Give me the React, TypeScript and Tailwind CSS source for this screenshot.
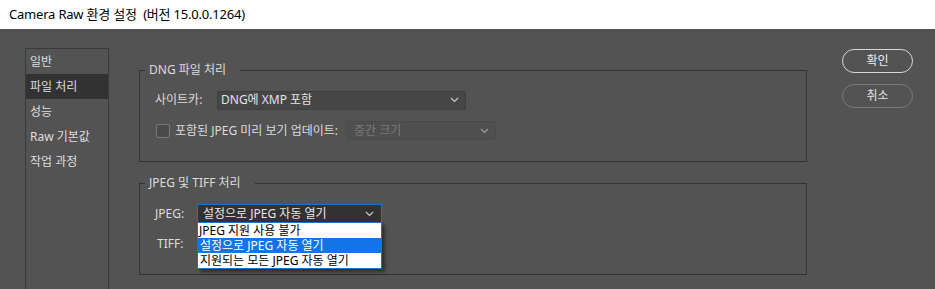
import React from "react";

const font = { fontFamily: '"Noto Sans", "Noto Sans CJK KR", sans-serif' };

function Chevron({ color = "#c8c8c8" }: { color?: string }) {
  return (
    <svg width="9" height="6" viewBox="0 0 9 6" className="shrink-0">
      <polyline points="1,1 4.5,4.5 8,1" fill="none" stroke={color} strokeWidth="1.2" />
    </svg>
  );
}

function Group({ title, children }: { title: string; children: React.ReactNode }) {
  return (
    <div className="relative h-[92px] w-[668px] border border-[#333333]">
      <span className="absolute -top-[9px] left-[5px] bg-[#535353] pl-[4px] pr-[14px] text-[12px] leading-[16px] text-[#dcdcdc]">
        {title}
      </span>
      {children}
    </div>
  );
}

const navItems = ["일반", "파일 처리", "성능", "Raw 기본값", "작업 과정"];
const jpegOptions = ["JPEG 지원 사용 불가", "설정으로 JPEG 자동 열기", "지원되는 모든 JPEG 자동 열기"];

export default function App() {
  return (
    <div className="flex h-[289px] w-[935px] flex-col overflow-hidden" style={font}>
      <div className="flex h-[29px] shrink-0 items-center bg-white pl-[9px] text-[13px] tracking-[-0.2px] text-black">
        Camera Raw 환경 설정&nbsp;&nbsp;(버전 15.0.0.1264)
      </div>

      <div className="flex flex-1 bg-[#535353] pl-[25px] pt-[19px]">
        {/* sidebar */}
        <div className="flex h-[260px] w-[84px] shrink-0 flex-col border border-[#3a3a3a]">
          {navItems.map((item, i) => (
            <div
              key={item}
              className={`flex h-[25px] items-center pl-[4px] text-[12px] text-[#dedede] ${
                i === 1 ? "bg-[#323232]" : ""
              }`}
            >
              {item}
            </div>
          ))}
        </div>

        {/* main */}
        <div className="ml-[30px] flex flex-col gap-[21px] pt-[22px]">
          <Group title="DNG 파일 처리">
            <div className="flex flex-col pl-[15px] pt-[20px]">
              <div className="flex h-[18px] items-center">
                <span className="w-[62px] text-[12px] text-[#dcdcdc]">사이트카:</span>
                <div className="flex h-[19px] w-[249px] items-center justify-between rounded-[2px] border border-[#3f3f3f] bg-[#464646] pl-[3px] pr-[6px] text-[12px] text-[#e4e4e4]">
                  DNG에 XMP 포함
                  <Chevron />
                </div>
              </div>
              <div className="mt-[12px] flex h-[19px] items-center">
                <div className="ml-[1px] h-[14px] w-[14px] rounded-[2px] border border-[#7a7a7a] bg-[#4a4a4a]" />
                <span className="ml-[5px] w-[172px] text-[12px] text-[#dcdcdc]">포함된 JPEG 미리 보기 업데이트:</span>
                <div className="flex h-[19px] w-[149px] items-center justify-between rounded-[2px] border border-[#4a4a4a] bg-[#4f4f4f] pl-[6px] pr-[6px] text-[12px] text-[#7a7a7a]">
                  중간 크기
                  <Chevron color="#a0a0a0" />
                </div>
              </div>
            </div>
          </Group>

          <Group title="JPEG 및 TIFF 처리">
            <div className="flex flex-col pl-[15px] pt-[20px]">
              <div className="flex items-start">
                <span className="mt-[1px] w-[42px] text-[12px] leading-[17px] text-[#dcdcdc]">JPEG:</span>
                <div className="relative">
                  <div className="flex h-[19px] w-[185px] items-center justify-between border border-[#1d6fd6] bg-[#323232] pl-[5px] pr-[7px] text-[12px] text-[#e8e8e8]">
                    설정으로 JPEG 자동 열기
                    <Chevron />
                  </div>
                  <div className="absolute left-0 top-[18px] z-10 flex w-[185px] flex-col border border-[#1d6fd6] bg-white text-[12px] text-black shadow-[3px_3px_4px_rgba(0,0,0,0.45)]">
                    {jpegOptions.map((opt, i) => (
                      <div
                        key={opt}
                        className={`flex h-[15px] items-center overflow-hidden whitespace-nowrap leading-[15px] ${
                          i === 1 ? "bg-[#1473e6] pl-[2px] text-white" : i === 0 ? "pl-[1px]" : "pl-[2px]"
                        }`}
                      >
                        {opt}
                      </div>
                    ))}
                  </div>
                </div>
              </div>
              <div className="mt-[12px] flex h-[18px] items-center pl-[2px] text-[12px] text-[#dcdcdc]">TIFF:</div>
            </div>
          </Group>
        </div>

        {/* buttons */}
        <div className="ml-[35px] flex flex-col gap-[11px] pt-[1px]">
          <button className="h-[24px] w-[71px] rounded-full border border-[#d8d8d8] text-[12px] text-[#eeeeee]">
            확인
          </button>
          <button className="h-[24px] w-[71px] rounded-full border border-[#7a7a7a] text-[12px] text-[#e0e0e0]">
            취소
          </button>
        </div>
      </div>
    </div>
  );
}
